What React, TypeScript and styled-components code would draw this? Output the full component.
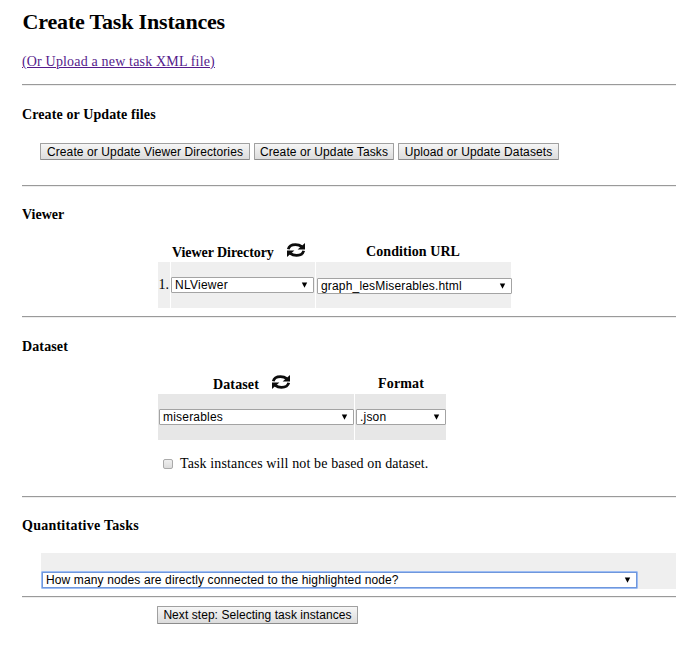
import React from "react";
import styled, { createGlobalStyle, css } from "styled-components";

const GlobalStyle = createGlobalStyle`
  * { box-sizing: border-box; }
  body { margin: 0; background: #fff; color: #000; overflow: hidden; }
`;

const serif = css`
  font-family: "Liberation Serif", "Times New Roman", serif;
  white-space: nowrap;
`;
const sans = css`
  font-family: "Liberation Sans", Arial, sans-serif;
  font-size: 12px;
  white-space: nowrap;
`;

const Page = styled.main`
  width: 676px;
  height: 658px;
  padding-left: 22px;
  overflow: hidden;
`;

const Section = styled.section<{ $height: number }>`
  height: ${(p) => p.$height}px;
  border-bottom: 1px solid #eee;
  box-shadow: inset 0 -1px 0 #9a9a9a;
  overflow: hidden;
`;

const Title = styled.h1`
  ${serif}
  font-size: 22px;
  line-height: 26px;
  margin: 9px 0 0;
  padding-left: 0.6px;
  letter-spacing: -0.18px;
`;

const UploadLink = styled.a`
  ${serif}
  display: block;
  width: max-content;
  margin-top: 18px;
  font-size: 14px;
  line-height: 17px;
  color: #551a8b;
  text-decoration: underline;
`;

const Heading = styled.h2<{ $top: number }>`
  ${serif}
  font-size: 14px;
  line-height: 16px;
  margin: ${(p) => p.$top}px 0 0;
`;

const ButtonRow = styled.div`
  display: flex;
  gap: 4px;
  margin: 20px 0 0 18px;
`;

const Button = styled.button<{ $width: number; $height?: number }>`
  ${sans}
  width: ${(p) => p.$width}px;
  height: ${(p) => p.$height ?? 17}px;
  padding: 0;
  line-height: 14px;
  display: flex;
  align-items: center;
  justify-content: center;
  border: 1px solid #a0a0a0;
  border-bottom-color: #8c8c8c;
  border-radius: 1px;
  color: #000;
  background: linear-gradient(#f6f6f6, #dcdcdc);
`;

const Grid = styled.div<{ $cols: string; $top: number }>`
  display: grid;
  grid-template-columns: ${(p) => p.$cols};
  grid-template-rows: 22px 46px;
  column-gap: 1px;
  margin: ${(p) => p.$top}px 0 0 136px;
`;

const ColumnTitle = styled.div<{ $indent: number; $top: number }>`
  ${serif}
  display: flex;
  padding-left: ${(p) => p.$indent}px;
  padding-top: ${(p) => p.$top}px;
  font-size: 14px;
  font-weight: bold;
  line-height: 16px;
`;

const Cell = styled.div<{ $shade: string; $top: number; $indent?: number }>`
  ${serif}
  font-size: 14px;
  line-height: 16px;
  padding: ${(p) => p.$top}px 0 0 ${(p) => p.$indent ?? 0}px;
  background: ${(p) => p.$shade};
`;

const SelectBox = styled.div<{ $width: number; $focused?: boolean }>`
  ${sans}
  display: flex;
  align-items: center;
  justify-content: space-between;
  width: ${(p) => p.$width}px;
  height: ${(p) => (p.$focused ? 18 : 16)}px;
  padding: 0 ${(p) => (p.$focused ? 6 : 5)}px 0 3px;
  line-height: 14px;
  background: #fff;
  border: 1px solid #a3a3a3;
  border-radius: 1px;
  ${(p) =>
    p.$focused &&
    css`
      border-color: #9dbdf4;
      box-shadow: inset 0 0 0 1px #6f97dc;
      padding-left: 4px;
    `}
`;

const RefreshSvg = styled.svg<{ $gap: number }>`
  width: 20px;
  height: 16px;
  margin-left: ${(p) => p.$gap}px;
  margin-top: -3px;
  flex: none;
`;

const CheckLabel = styled.label`
  ${serif}
  display: flex;
  align-items: center;
  margin: 16px 0 0 141px;
  font-size: 14px;
  line-height: 16px;
`;

const CheckBox = styled.span`
  width: 10px;
  height: 10px;
  margin-right: 7px;
  border: 1px solid #aaa;
  border-radius: 2px;
  background: linear-gradient(#efefef, #dcdcdc);
`;

const TaskPanel = styled.div`
  height: 36px;
  margin: 19px 0 0 19px;
  padding-top: 18px;
  background: #efefef;
`;

const NextRow = styled.div`
  padding: 8px 0 0 135px;
`;

const Label = styled.span<{ $spacing?: number }>`
  letter-spacing: ${(p) => p.$spacing ?? 0}px;
`;

const Refresh = ({ gap }: { gap: number }) => (
  <RefreshSvg $gap={gap} viewBox="0 0 20 16">
    <path d="M2.300 7.200C3 4 6 2.600 9.500 2.600c2.800 0 4.600.7 6.300 2" fill="none" stroke="#0c0c0c" strokeWidth="2.800" />
    <path d="M19 1v6.400h-7.400z" fill="#0c0c0c" />
    <path d="M17.700 8.800c-.7 3.200-3.700 4.600-7.200 4.600-2.800 0-4.600-.7-6.300-2" fill="none" stroke="#0c0c0c" strokeWidth="2.800" />
    <path d="M1 15V8.600h7.400z" fill="#0c0c0c" />
  </RefreshSvg>
);

const Arrow = () => (
  <svg width="7" height="6" viewBox="0 0 7 6">
    <path d="M.8.6h5.400L3.500 5.700z" fill="#000" />
  </svg>
);

interface SelectProps {
  width: number;
  value: string;
  spacing?: number;
  focused?: boolean;
}

const Select = ({ width, value, spacing, focused }: SelectProps) => (
  <SelectBox $width={width} $focused={focused}>
    <Label $spacing={spacing}>{value}</Label>
    <Arrow />
  </SelectBox>
);

export default function App() {
  return (
    <>
      <GlobalStyle />
      <Page>
        <Section $height={86}>
          <Title>Create Task Instances</Title>
          <UploadLink href="#">
            <Label $spacing={0.17}>(Or Upload a new task XML file)</Label>
          </UploadLink>
        </Section>

        <Section $height={101}>
          <Heading $top={21}><Label $spacing={0.11}>Create or Update files</Label></Heading>
          <ButtonRow>
            <Button $width={210}><Label $spacing={0.1}>Create or Update Viewer Directories</Label></Button>
            <Button $width={140}><Label $spacing={0.1}>Create or Update Tasks</Label></Button>
            <Button $width={161}><Label $spacing={0.12}>Upload or Update Datasets</Label></Button>
          </ButtonRow>
        </Section>

        <Section $height={131}>
          <Heading $top={20}><Label>Viewer</Label></Heading>
          <Grid $cols="12px 144px 195px" $top={17}>
            <span />
            <ColumnTitle $indent={1} $top={5}>
              <Label $spacing={-0.06}>Viewer Directory</Label>
              <Refresh gap={12} />
            </ColumnTitle>
            <ColumnTitle $indent={50} $top={4}><Label $spacing={0.08}>Condition URL</Label></ColumnTitle>
            <Cell $shade="#efefef" $top={15} $indent={0.6}>1.</Cell>
            <Cell $shade="#efefef" $top={15}>
              <Select width={143} value="NLViewer" spacing={0.25} />
            </Cell>
            <Cell $shade="#efefef" $top={16} $indent={1}>
              <Select width={195} value="graph_lesMiserables.html" spacing={0.17} />
            </Cell>
          </Grid>
        </Section>

        <Section $height={180}>
          <Heading $top={21}><Label $spacing={0.12}>Dataset</Label></Heading>
          <Grid $cols="196px 91px" $top={17}>
            <ColumnTitle $indent={55} $top={5}>
              <Label $spacing={0.12}>Dataset</Label>
              <Refresh gap={12} />
            </ColumnTitle>
            <ColumnTitle $indent={23} $top={4}><Label $spacing={0.17}>Format</Label></ColumnTitle>
            <Cell $shade="#e7e7e7" $top={15} $indent={1}>
              <Select width={195} value="miserables" spacing={0.2} />
            </Cell>
            <Cell $shade="#e7e7e7" $top={15} $indent={1}>
              <Select width={90} value=".json" spacing={0.2} />
            </Cell>
          </Grid>
          <CheckLabel>
            <CheckBox role="checkbox" aria-checked={false} />
            <Label $spacing={0.12}>Task instances will not be based on dataset.</Label>
          </CheckLabel>
        </Section>

        <Section $height={100}>
          <Heading $top={20}><Label $spacing={0.25}>Quantitative Tasks</Label></Heading>
          <TaskPanel>
            <Select
              focused
              width={597}
              value="How many nodes are directly connected to the highlighted node?"
              spacing={0.125}
            />
          </TaskPanel>
        </Section>

        <NextRow>
          <Button $width={201} $height={18}><Label $spacing={0.06}>Next step: Selecting task instances</Label></Button>
        </NextRow>
      </Page>
    </>
  );
}
